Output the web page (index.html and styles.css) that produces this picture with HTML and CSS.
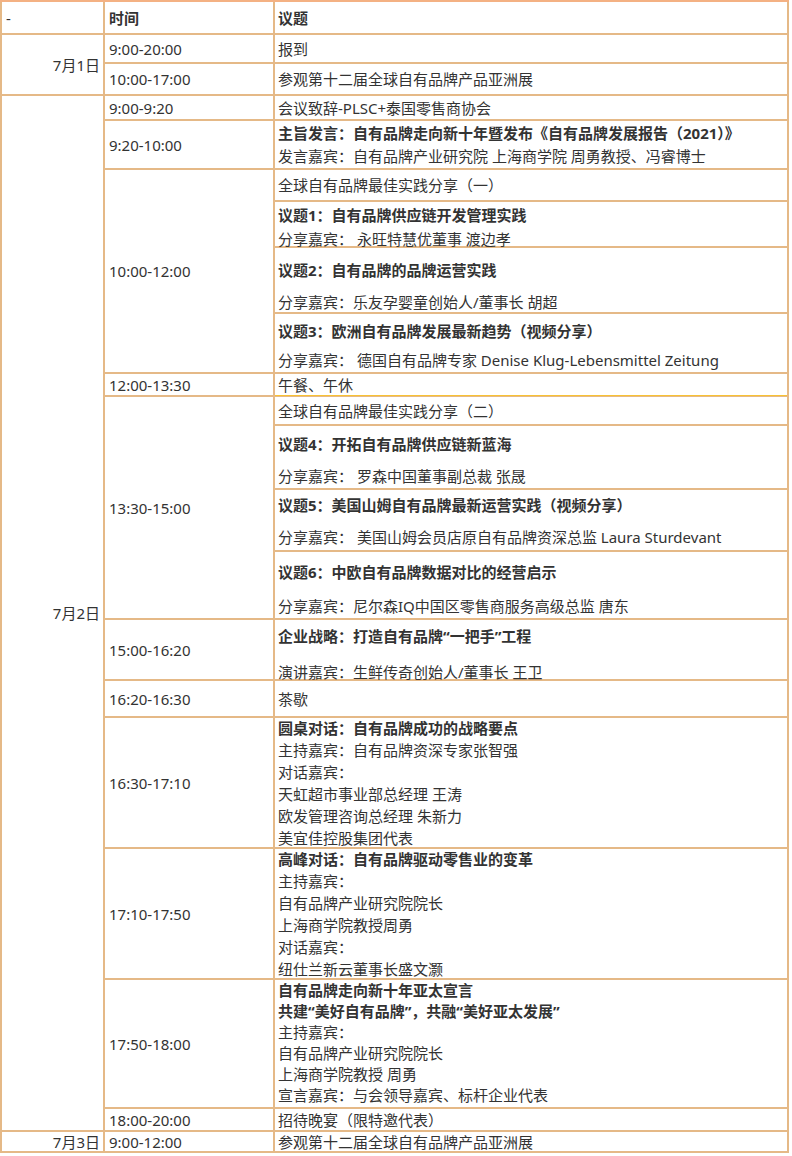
FILE: index.html
```html
<!DOCTYPE html>
<html lang="zh-CN">
<head>
<meta charset="utf-8">
<title>议程</title>
<link rel="stylesheet" href="styles.css">
</head>
<body>
<div class="agenda">
  <div class="cell date head-dash">-</div>
  <div class="cell time bold">时间</div>
  <div class="cell topic bold">议题</div>

  <div class="cell date span2">7月1日</div>
  <div class="cell time">9:00-20:00</div>
  <div class="cell topic">报到</div>
  <div class="cell time">10:00-17:00</div>
  <div class="cell topic">参观第十二届全球自有品牌产品亚洲展</div>

  <div class="cell date span17">7月2日</div>
  <div class="cell time">9:00-9:20</div>
  <div class="cell topic">会议致辞-PLSC+泰国零售商协会</div>
  <div class="cell time">9:20-10:00</div>
  <div class="cell topic pair r-keynote">
    <div class="bold">主旨发言：自有品牌走向新十年暨发布《自有品牌发展报告（2021）》</div>
    <div>发言嘉宾：自有品牌产业研究院 上海商学院 周勇教授、冯睿博士</div>
  </div>
  <div class="cell time span4">10:00-12:00</div>
  <div class="cell topic">全球自有品牌最佳实践分享（一）</div>
  <div class="cell topic pair r-t1">
    <div class="bold">议题1：自有品牌供应链开发管理实践</div>
    <div>分享嘉宾： 永旺特慧优董事 渡边孝</div>
  </div>
  <div class="cell topic pair r-t2">
    <div class="bold">议题2：自有品牌的品牌运营实践</div>
    <div>分享嘉宾：乐友孕婴童创始人/董事长 胡超</div>
  </div>
  <div class="cell topic pair r-t3">
    <div class="bold">议题3：欧洲自有品牌发展最新趋势（视频分享）</div>
    <div>分享嘉宾： 德国自有品牌专家 Denise Klug-Lebensmittel Zeitung</div>
  </div>
  <div class="cell time">12:00-13:30</div>
  <div class="cell topic lunch">午餐、午休</div>
  <div class="cell time span4">13:30-15:00</div>
  <div class="cell topic">全球自有品牌最佳实践分享（二）</div>
  <div class="cell topic pair r-t4">
    <div class="bold">议题4：开拓自有品牌供应链新蓝海</div>
    <div>分享嘉宾： 罗森中国董事副总裁 张晟</div>
  </div>
  <div class="cell topic pair r-t5">
    <div class="bold">议题5：美国山姆自有品牌最新运营实践（视频分享）</div>
    <div>分享嘉宾： 美国山姆会员店原自有品牌资深总监 Laura Sturdevant</div>
  </div>
  <div class="cell topic pair r-t6">
    <div class="bold">议题6：中欧自有品牌数据对比的经营启示</div>
    <div>分享嘉宾：尼尔森IQ中国区零售商服务高级总监 唐东</div>
  </div>
  <div class="cell time">15:00-16:20</div>
  <div class="cell topic pair r-t7">
    <div class="bold">企业战略：打造自有品牌“一把手”工程</div>
    <div>演讲嘉宾：生鲜传奇创始人/董事长 王卫</div>
  </div>
  <div class="cell time">16:20-16:30</div>
  <div class="cell topic">茶歇</div>
  <div class="cell time">16:30-17:10</div>
  <div class="cell topic multi">
    <div class="bold">圆桌对话：自有品牌成功的战略要点</div>
    <div>主持嘉宾：自有品牌资深专家张智强</div>
    <div>对话嘉宾：</div>
    <div>天虹超市事业部总经理 王涛</div>
    <div>欧发管理咨询总经理 朱新力</div>
    <div>美宜佳控股集团代表</div>
  </div>
  <div class="cell time">17:10-17:50</div>
  <div class="cell topic multi">
    <div class="bold">高峰对话：自有品牌驱动零售业的变革</div>
    <div>主持嘉宾：</div>
    <div>自有品牌产业研究院院长</div>
    <div>上海商学院教授周勇</div>
    <div>对话嘉宾：</div>
    <div>纽仕兰新云董事长盛文灏</div>
  </div>
  <div class="cell time">17:50-18:00</div>
  <div class="cell topic multi tight">
    <div class="bold">自有品牌走向新十年亚太宣言</div>
    <div class="bold">共建“美好自有品牌”，共融“美好亚太发展”</div>
    <div>主持嘉宾：</div>
    <div>自有品牌产业研究院院长</div>
    <div>上海商学院教授 周勇</div>
    <div>宣言嘉宾：与会领导嘉宾、标杆企业代表</div>
  </div>
  <div class="cell time">18:00-20:00</div>
  <div class="cell topic">招待晚宴（限特邀代表）</div>

  <div class="cell date">7月3日</div>
  <div class="cell time">9:00-12:00</div>
  <div class="cell topic">参观第十二届全球自有品牌产品亚洲展</div>
</div>
</body>
</html>
```

FILE: styles.css
```css
html, body {
  margin: 0;
  padding: 0;
  background: #ffffff;
}

body {
  font-family: "Noto Sans", "Noto Sans CJK SC", sans-serif;
  font-size: 15px;
  color: #333333;
}

.agenda {
  display: inline-grid;
  grid-template-columns: 101px 168px 512px;
  grid-template-rows: 31px 27px 30px 23px 47px 30px 44px 64px 58px 21px 27px 62px 60px 66px 59px 35px 129px 129px 127px 21px 19px;
  gap: 2px;
  padding: 0 2px 2px;
  border-top: 2px solid #f4b183;
  background: #e5b987;
}

.cell {
  background: #ffffff;
  display: flex;
  flex-direction: column;
  justify-content: center;
  line-height: 22px;
  white-space: nowrap;
  min-width: 0;
}

.bold {
  font-weight: bold;
}

.date {
  align-items: flex-end;
  padding-right: 3px;
}

.head-dash {
  align-items: flex-start;
  padding-left: 4px;
  padding-right: 0;
}

.time {
  padding-left: 4px;
}

.topic {
  padding-left: 3px;
}

.span2 { grid-row: span 2; }
.span4 { grid-row: span 4; }
.span17 { grid-row: span 17; }

.lunch {
  border-bottom: 1px solid #f8c234;
  margin-bottom: -1px;
}

.pair {
  justify-content: flex-start;
}

.r-keynote { padding-top: 1px; gap: 1px; }
.r-t1 { padding-top: 2px; gap: 2px; }
.r-t2 { padding-top: 11px; gap: 10px; }
.r-t3 { padding-top: 6px; gap: 7px; }
.r-t4 { padding-top: 7px; gap: 10px; }
.r-t5 { padding-top: 4px; gap: 10px; }
.r-t6 { padding-top: 9px; gap: 12px; }
.r-t7 { padding-top: 5px; gap: 14px; }

.multi {
  line-height: 22px;
}

.tight {
  justify-content: flex-start;
  line-height: 21px;
}
```
